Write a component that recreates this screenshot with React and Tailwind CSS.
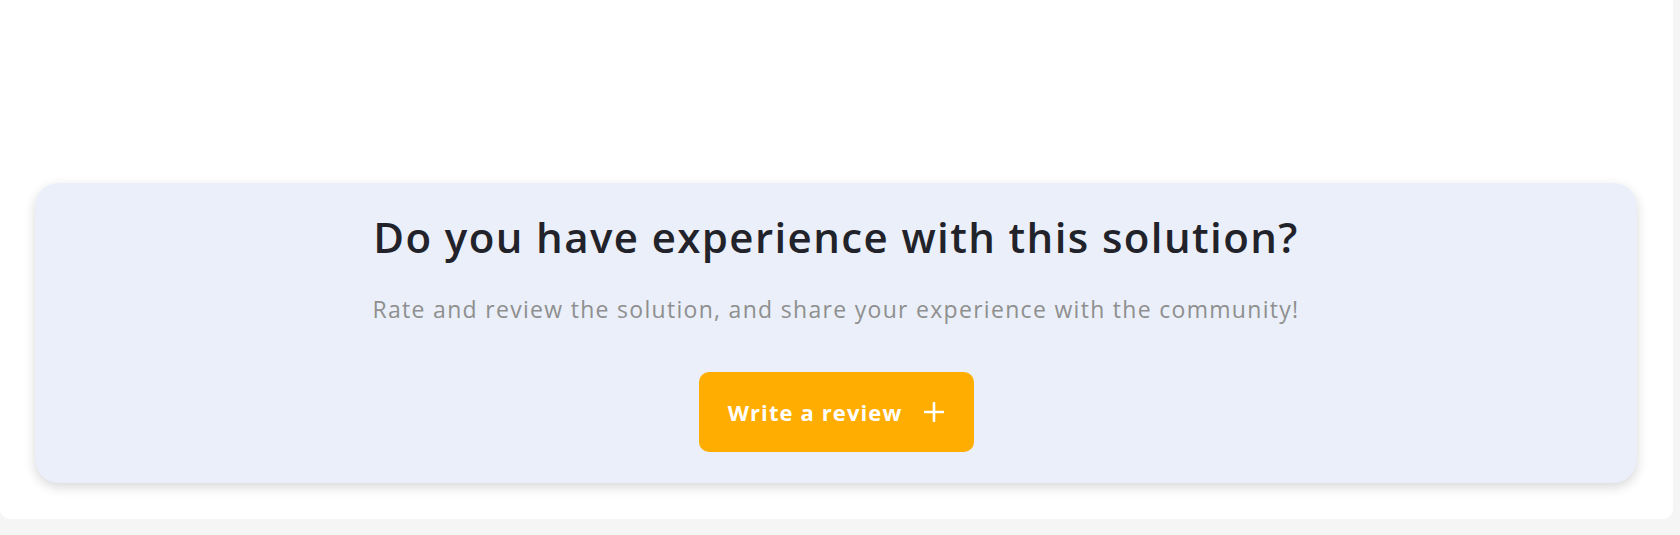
import React from "react";

export default function App() {
  return (
    <div className="min-h-[535px] bg-[#f5f5f5] pr-[7px] pb-[16px]" style={{ fontFamily: '"Open Sans", "Noto Sans", sans-serif' }}>
      <div className="bg-white rounded-b-[10px] pt-[183px] pl-[35px] pr-[36px] pb-[36px]">
        <div className="flex flex-col items-center rounded-[24px] bg-[#eaeff9] shadow-[0_4px_12px_rgba(0,0,0,0.16)] h-[300px] pt-[30px]">
          <h2 className="text-[42px] leading-[48px] font-semibold tracking-[1.4px] text-[#22232a]">Do you have experience with this solution?</h2>
          <p className="mt-[33px] text-[23px] leading-[30px] tracking-[1.3px] text-[#8f8f8f]">Rate and review the solution, and share your experience with the community!</p>
          <button className="mt-[48px] flex items-center justify-center gap-[22px] w-[275px] h-[80px] rounded-[10px] bg-[#ffad00] text-white text-[22px] font-bold tracking-[1.1px]">
            <span>Write a review</span>
            <svg width="20" height="20" viewBox="0 0 20 20" fill="none" stroke="white" strokeWidth="2.6" strokeLinecap="round">
              <path d="M10 1v18M1 10h18" />
            </svg>
          </button>
        </div>
      </div>
    </div>
  );
}
